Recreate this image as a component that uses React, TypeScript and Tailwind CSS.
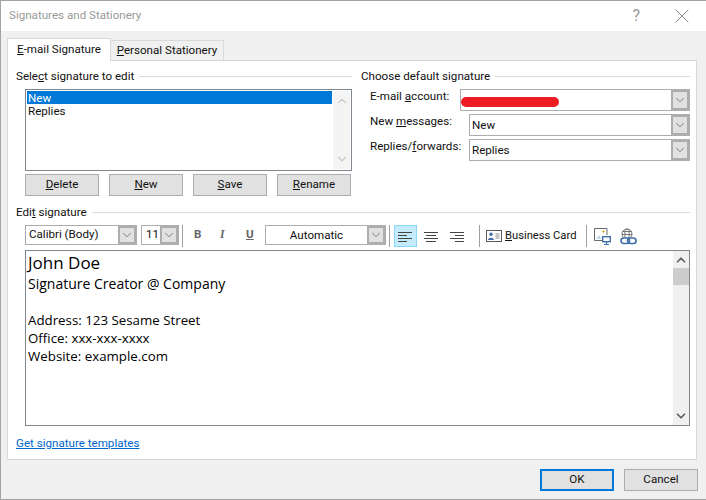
import { ChevronDown, ChevronUp, X } from "lucide-react";
import type { ReactNode } from "react";

const font = "font-['Roboto','Open_Sans',sans-serif]";

const ComboArrow = () => (
  <div className="w-[18px] self-stretch shrink-0 bg-[#e1e1e1] border-2 border-[#adadad] flex items-center justify-center">
    <ChevronDown className="w-[14px] h-[14px] shrink-0 text-[#606060]" strokeWidth={1.3} />
  </div>
);

const Combo = ({ className, children }: { className: string; children?: ReactNode }) => (
  <div className={`flex items-stretch bg-white border border-[#adadad] ${className}`}>
    <div className="flex-1 min-w-0 flex items-center text-[11.6px] text-[#111] leading-none">{children}</div>
    <ComboArrow />
  </div>
);

const Btn = ({ children }: { children: ReactNode }) => (
  <button className="w-[74px] h-[22px] bg-[#e1e1e1] border border-[#adadad] text-[11.6px] text-[#111] leading-none">
    {children}
  </button>
);

const GroupLabel = ({ children }: { children: ReactNode }) => (
  <div className="flex items-center gap-[5px] h-4 text-[11.6px] text-[#111] leading-none whitespace-nowrap">
    <span className="pt-px">{children}</span>
    <div className="flex-1 h-px bg-[#dcdcdc]" />
  </div>
);

const Sep = ({ className }: { className: string }) => (
  <div className={`w-px h-[22px] bg-[#a0a0a0] shrink-0 ${className}`} />
);

const AlignIcon = ({ rows }: { rows: [number, number][] }) => (
  <svg width="15" height="11" viewBox="0 0 15 11" className="text-[#444]">
    {rows.map(([x, w], i) => (
      <rect key={i} x={x} y={i * 3 + 1} width={w} height="1" fill="currentColor" />
    ))}
  </svg>
);

const CardIcon = () => (
  <svg width="16" height="12" viewBox="0 0 16 12" className="shrink-0">
    <rect x="0.5" y="0.5" width="15" height="11" fill="#fff" stroke="#5a5a5a" />
    <circle cx="5" cy="4.2" r="1.8" fill="#4a6fa8" />
    <path d="M2 10 C2 7 8 7 8 10 Z" fill="#4a6fa8" />
    <path d="M9.5 4h4M9.5 6h4M9.5 8h4" stroke="#8a8a8a" />
  </svg>
);

const PictureIcon = () => (
  <svg width="17" height="17" viewBox="0 0 17 17" className="shrink-0">
    <path d="M8 12.5H0.5V0.5H13V7" fill="#fff" stroke="#6a6a6a" />
    <path d="M2.5 11l2.5-4 2.5 4z" fill="#bcd7e4" />
    <path d="M9.5 2v3M8 3.5h3" stroke="#e8b84a" />
    <rect x="8.7" y="8.7" width="7.6" height="5" fill="#fff" stroke="#3f6fa8" strokeWidth="1.4" />
    <path d="M12.5 14v2M10 16.5h5" stroke="#3f6fa8" strokeWidth="1.2" />
  </svg>
);

const LinkIcon = () => (
  <svg width="17" height="17" viewBox="0 0 17 17" className="shrink-0">
    <circle cx="7" cy="6" r="5" fill="none" stroke="#777" />
    <ellipse cx="7" cy="6" rx="2.2" ry="5" fill="none" stroke="#777" />
    <path d="M2 3.5h10M2 6.5h10" stroke="#777" />
    <rect x="1" y="10" width="8.5" height="5.5" rx="2.7" fill="#fff" stroke="#3f6fa8" strokeWidth="1.7" />
    <rect x="7.5" y="10" width="8.5" height="5.5" rx="2.7" fill="none" stroke="#3f6fa8" strokeWidth="1.7" />
  </svg>
);

export default function App() {
  return (
    <div className={`w-[706px] h-[500px] flex flex-col bg-[#f0f0f0] border-t border-l border-b border-[#a3a3a3] ${font}`}>
      {/* Title bar */}
      <div className="h-[30px] bg-white flex items-center shrink-0">
        <span className="ml-2 text-[11.6px] text-[#9a9a9a]">Signatures and Stationery</span>
        <span className="ml-auto text-[16px] text-[#9a9a9a]">?</span>
        <X className="ml-[30px] mr-[12px] w-6 h-6 text-[#8a8a8a]" strokeWidth={1} />
      </div>

      {/* Tabs */}
      <div className="flex items-end pl-[6px] mt-[7px] h-[22px] shrink-0 relative z-10">
        <div className="w-[104px] h-[23px] -mb-px bg-white border border-b-0 border-[#d9d9d9] flex items-center justify-center text-[11.6px] text-[#111]">
          <span><span className="underline">E</span>-mail Signature</span>
        </div>
        <div className="w-[113px] h-[20px] bg-[#f0f0f0] border border-b-0 border-l-0 border-[#d9d9d9] flex items-center justify-center text-[11.6px] text-[#111]">
          <span><span className="underline">P</span>ersonal Stationery</span>
        </div>
      </div>

      {/* Panel */}
      <div className="ml-[6px] w-[690px] h-[400px] bg-white border border-[#d9d9d9] shrink-0 flex flex-col pl-2 pr-[5px] pt-[7px]">
        <div className="flex h-[113px] shrink-0">
          <div className="w-[336px] shrink-0">
            <GroupLabel>
              <span>Sele<span className="underline">c</span>t signature to edit</span>
            </GroupLabel>
            <div className="ml-[9px] mt-[5px] w-[327px] h-[82px] border border-[#7f8790] p-px flex">
              <div className="flex-1 text-[11.6px] leading-[13px] text-[#111]">
                <div className="bg-[#0078d7] text-white pl-px h-[13px] flex items-center pt-px">New</div>
                <div className="pl-px h-[13px] flex items-center pt-px">Replies</div>
              </div>
              <div className="w-[17px] ml-px bg-[#f4f4f4] flex flex-col justify-between items-center py-[3px]">
                <ChevronUp className="w-[14px] h-[14px] text-[#c8c8c8]" strokeWidth={2} />
                <ChevronDown className="w-[14px] h-[14px] text-[#c8c8c8]" strokeWidth={2} />
              </div>
            </div>
            <div className="ml-[9px] mt-[3px] flex gap-[10px]">
              <Btn><span className="underline">D</span>elete</Btn>
              <Btn><span className="underline">N</span>ew</Btn>
              <Btn><span className="underline">S</span>ave</Btn>
              <Btn><span className="underline">R</span>ename</Btn>
            </div>
          </div>
          <div className="ml-[9px] w-[329px] shrink-0">
            <GroupLabel>Choose default signature</GroupLabel>
            <div className="mt-[5px] flex flex-col gap-[3px] text-[11.6px] text-[#111] leading-none">
              <div className="flex items-start h-[22px]">
                <span className="ml-[9px] w-[90px] mt-[2px]">E-mail <span className="underline">a</span>ccount:</span>
                <Combo className="w-[230px] h-[22px]">
                  <div className="mt-[3px] w-[98px] h-[10px] rounded-full bg-[#ed1c24]" />
                </Combo>
              </div>
              <div className="flex items-start h-[22px]">
                <span className="ml-[9px] w-[99px] mt-[2px]">New <span className="underline">m</span>essages:</span>
                <Combo className="w-[221px] h-[22px]"><span className="ml-[2px] mt-px">New</span></Combo>
              </div>
              <div className="flex items-start h-[22px]">
                <span className="ml-[9px] w-[99px] mt-[2px]">Replies/<span className="underline">f</span>orwards:</span>
                <Combo className="w-[221px] h-[22px]"><span className="ml-[2px] mt-px">Replies</span></Combo>
              </div>
            </div>
          </div>
        </div>

        {/* Edit signature */}
        <div className="mt-[23px] w-[674px]">
          <GroupLabel>
            <span>Edi<span className="underline">t</span> signature</span>
          </GroupLabel>
        </div>

        {/* Formatting toolbar */}
        <div className="mt-[5px] ml-[9px] h-[22px] flex items-start text-[11.6px] text-[#111] leading-none shrink-0">
          <Combo className="w-[112px] h-[20px]"><span className="ml-[3px]">Calibri (Body)</span></Combo>
          <Combo className="ml-[4px] w-[38px] h-[20px]"><span className="ml-[4px]">11</span></Combo>
          <Sep className="ml-[3px]" />
          <span className="ml-[11px] mt-1 font-bold text-[#666] w-[26px]">B</span>
          <span className="mt-1 italic font-['Liberation_Serif',serif] font-bold text-[#666] w-[26px]">I</span>
          <span className="mt-1 font-bold underline text-[#666] w-[19px]">U</span>
          <div className="w-[121px] h-[20px] flex items-stretch bg-white border border-[#adadad]">
            <div className="flex-1 flex items-center justify-center pt-px">Automatic</div>
            <ComboArrow />
          </div>
          <Sep className="ml-[3px]" />
          <div className="ml-[4px] w-[23px] h-[22px] bg-[#c4ebfb] border border-[#8cd6f5] flex items-center justify-center">
            <AlignIcon rows={[[0, 14], [0, 9], [0, 14], [0, 9]]} />
          </div>
          <div className="ml-[7px] h-[22px] flex items-center">
            <AlignIcon rows={[[0, 14], [2, 10], [0, 14], [2, 10]]} />
          </div>
          <div className="ml-[11px] h-[22px] flex items-center">
            <AlignIcon rows={[[0, 14], [5, 9], [0, 14], [5, 9]]} />
          </div>
          <Sep className="ml-[14px]" />
          <div className="ml-[6px] w-[90px] h-[22px] flex items-center gap-[3px] shrink-0 whitespace-nowrap">
            <CardIcon />
            <span className="text-[11.2px]"><span className="underline">B</span>usiness Card</span>
          </div>
          <Sep className="ml-[10px]" />
          <div className="ml-[7px] h-[22px] flex items-center gap-[9px]">
            <PictureIcon />
            <LinkIcon />
          </div>
        </div>

        {/* Signature editor */}
        <div className="mt-[3px] ml-[9px] w-[665px] h-[176px] border border-[#7f8790] flex shrink-0">
          <div className="flex-1 pl-[2px] pt-px text-black font-['Open_Sans',sans-serif]">
            <div className="text-[17px] leading-[21px]">John Doe</div>
            <div className="text-[14px] leading-[21px]">Signature Creator @ Company</div>
            <div className="text-[13.3px] leading-[18px] mt-[17px]">Address: 123 Sesame Street</div>
            <div className="text-[13.3px] leading-[18px]">Office: xxx-xxx-xxxx</div>
            <div className="text-[13.3px] leading-[18px]">Website: example.com</div>
          </div>
          <div className="w-[16px] bg-[#f0f0f0] flex flex-col items-center">
            <ChevronUp className="mt-[2px] w-[14px] h-[14px] text-[#606060]" strokeWidth={3} />
            <div className="mt-px w-full h-[17px] bg-[#cdcdcd]" />
            <ChevronDown className="mt-auto mb-[2px] w-[14px] h-[14px] text-[#606060]" strokeWidth={3} />
          </div>
        </div>

        <a className="mt-[9px] w-fit text-[11.6px] leading-4 text-[#0066cc] underline">Get signature templates</a>
      </div>

      {/* Footer buttons */}
      <div className="flex justify-end gap-[10px] pr-2 mt-[9px]">
        <button className="w-[74px] h-[22px] bg-[#e1e1e1] border-2 border-[#0078d7] text-[11.6px] text-[#111] leading-none">OK</button>
        <button className="w-[74px] h-[22px] bg-[#e1e1e1] border border-[#adadad] text-[11.6px] text-[#111] leading-none">Cancel</button>
      </div>
    </div>
  );
}
